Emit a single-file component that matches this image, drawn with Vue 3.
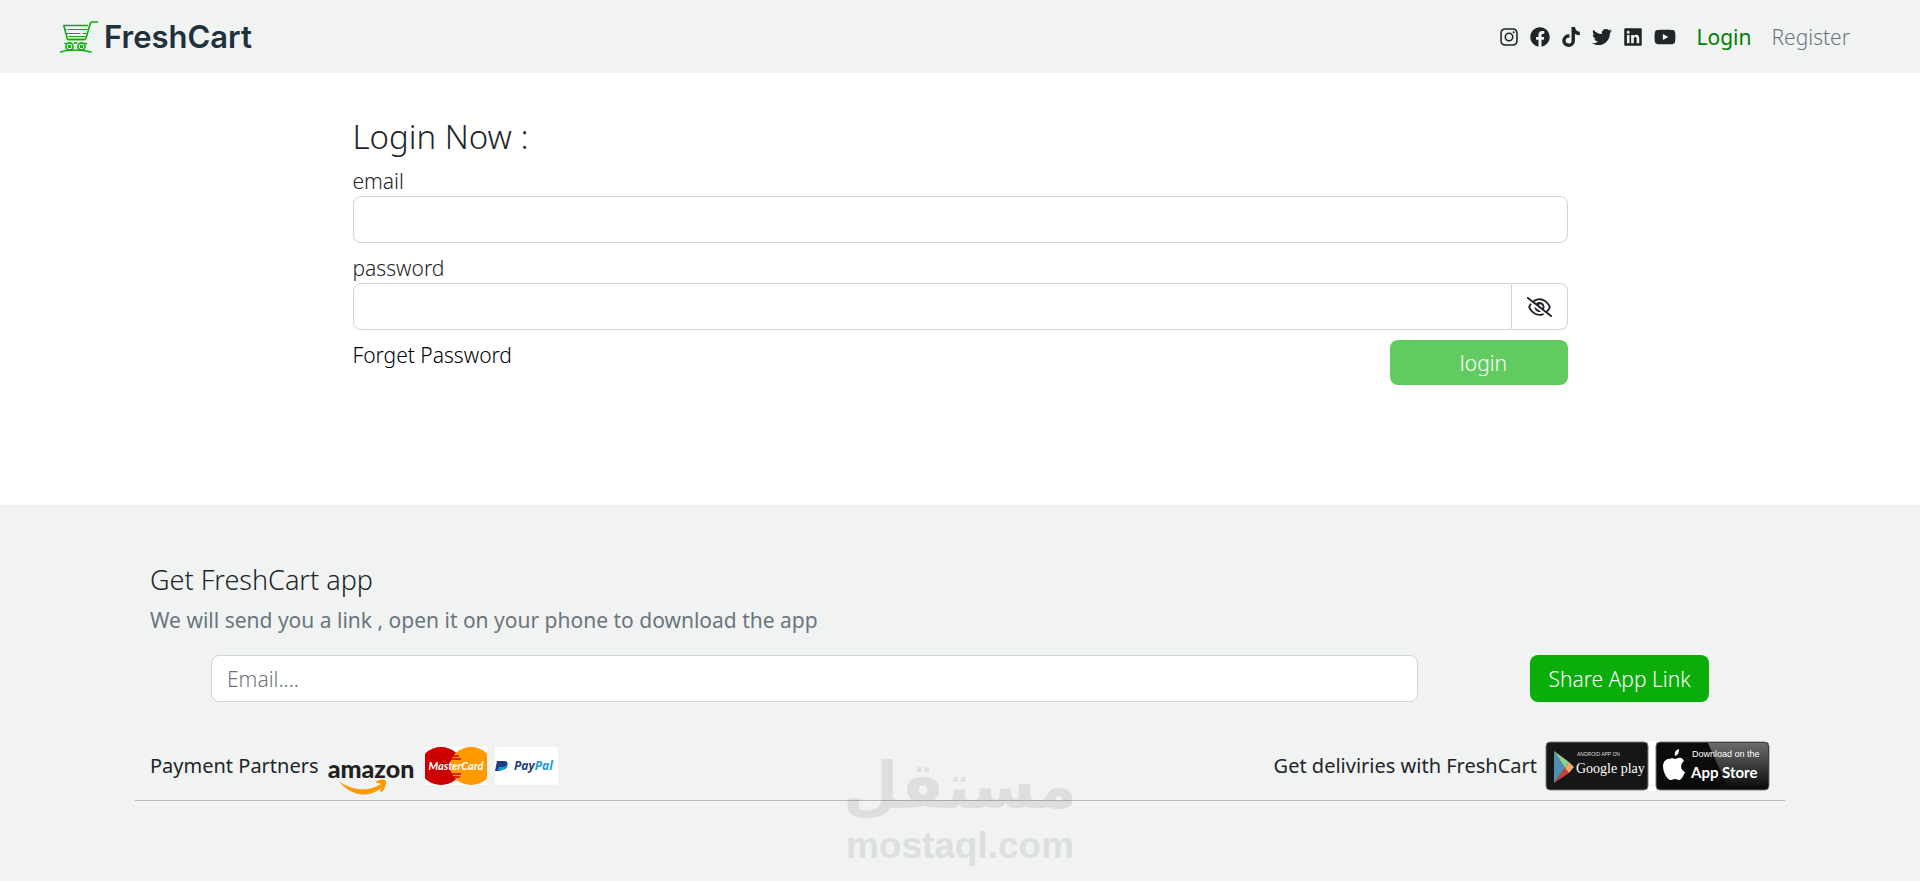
<script setup>
import { ref } from 'vue'

const email = ref('')
const password = ref('')
const shareEmail = ref('')
const showPassword = ref(false)

const socials = [
  {
    name: 'Instagram', w: 18, box: '0 0 448 512',
    d: 'M224 141a115 115 0 1 0 0 230 115 115 0 0 0 0-230zm0 190a75 75 0 1 1 0-150 75 75 0 0 1 0 150zM370 136a27 27 0 1 1-54 0 27 27 0 0 1 54 0zM130 32C50 32 0 82 0 162v188c0 80 50 130 130 130h188c80 0 130-50 130-130V162c0-80-50-130-130-130H130zm0 40h188c58 0 90 32 90 90v188c0 58-32 90-90 90H130c-58 0-90-32-90-90V162c0-58 32-90 90-90z'
  },
  {
    name: 'Facebook', w: 20, box: '0 0 512 512',
    d: 'M504 256C504 119 393 8 256 8S8 119 8 256c0 123.78 90.69 226.38 209.25 245V327.69h-63V256h63v-54.64c0-62.15 37-96.48 93.67-96.48 27.14 0 55.52 4.84 55.52 4.84v61h-31.28c-30.8 0-40.41 19.12-40.41 38.73V256h68.78l-11 71.69h-57.78V501C413.31 482.38 504 379.78 504 256z'
  },
  {
    name: 'TikTok', w: 18, box: '0 0 448 512',
    d: 'M448,209.91a210.06,210.06,0,0,1-122.77-39.25V349.38A162.55,162.55,0,1,1,185,188.31V278.2a74.62,74.62,0,1,0,52.23,71.18V0l88,0a121.18,121.18,0,0,0,1.86,22.17h0A122.18,122.18,0,0,0,381,102.39a121.43,121.43,0,0,0,67,20.14Z'
  },
  {
    name: 'Twitter', w: 20, box: '0 0 512 512',
    d: 'M459.37 151.716c.325 4.548.325 9.097.325 13.645 0 138.72-105.583 298.558-298.558 298.558-59.452 0-114.68-17.219-161.137-47.106 8.447.974 16.568 1.299 25.34 1.299 49.055 0 94.213-16.568 130.274-44.832-46.132-.975-84.792-31.188-98.112-72.772 6.498.974 12.995 1.624 19.818 1.624 9.421 0 18.843-1.3 27.614-3.573-48.081-9.747-84.143-51.98-84.143-102.985v-1.299c13.969 7.797 30.214 12.67 47.431 13.319-28.264-18.843-46.781-51.005-46.781-87.391 0-19.492 5.197-37.36 14.294-52.954 51.655 63.675 129.3 105.258 216.365 109.807-1.624-7.797-2.599-15.918-2.599-24.04 0-57.828 46.782-104.934 104.934-104.934 30.213 0 57.502 12.67 76.67 33.137 23.715-4.548 46.456-13.32 66.599-25.34-7.798 24.366-24.366 44.833-46.132 57.827 21.117-2.273 41.584-8.122 60.426-16.243-14.292 20.791-32.161 39.308-52.628 54.253z'
  },
  {
    name: 'LinkedIn', w: 18, box: '0 0 448 512',
    d: 'M416 32H31.9C14.3 32 0 46.5 0 64.3v383.4C0 465.5 14.3 480 31.9 480H416c17.6 0 32-14.5 32-32.3V64.3c0-17.8-14.4-32.3-32-32.3zM135.4 416H69V202.2h66.5V416zm-33.2-243c-21.3 0-38.5-17.3-38.5-38.5S80.9 96 102.2 96c21.2 0 38.5 17.3 38.5 38.5 0 21.3-17.2 38.5-38.5 38.5zm282.1 243h-66.4V312c0-24.8-.5-56.7-34.5-56.7-34.6 0-39.9 27-39.9 54.9V416h-66.4V202.2h63.7v29.2h.9c8.9-16.8 30.6-34.5 62.9-34.5 67.2 0 79.7 44.3 79.7 101.9V416z'
  },
  {
    name: 'YouTube', w: 22, box: '0 0 576 512',
    d: 'M549.655 124.083c-6.281-23.65-24.787-42.276-48.284-48.597C458.781 64 288 64 288 64S117.22 64 74.629 75.486c-23.497 6.322-42.003 24.947-48.284 48.597-11.412 42.867-11.412 132.305-11.412 132.305s0 89.438 11.412 132.305c6.281 23.65 24.787 41.5 48.284 47.821C117.22 448 288 448 288 448s170.78 0 213.371-11.486c23.497-6.321 42.003-24.171 48.284-47.821 11.412-42.867 11.412-132.305 11.412-132.305s0-89.438-11.412-132.305zm-317.51 213.508V175.185l142.739 81.205-142.739 81.201z'
  }
]
</script>

<template>
  <div class="page">
    <header class="navbar">
      <a class="brand" href="#">
        <svg class="cart" viewBox="0 0 38 32" width="38" height="32" fill="none" stroke="#0aad0a" stroke-width="1.6" stroke-linecap="round" stroke-linejoin="round" aria-hidden="true">
          <path d="M37.5 1h-5.2c-1.3 0-1.8.8-2.1 1.8L26 17.2c-.3.9-.8 1.3-1.8 1.3H9" />
          <path d="M27.5 4.500H3.800L7.600 18.500H24" />
          <path d="M8 8.500H27M5.500 8.500h.5M6.500 12.500H20M23 12.500h3.500M9 15.500H25" stroke-width="1.2" />
          <circle cx="9.500" cy="25.500" r="3.600" /><circle cx="9.500" cy="25.500" r="1" />
          <circle cx="21.500" cy="25.500" r="3.600" /><circle cx="21.500" cy="25.500" r="1" />
          <path d="M14 22h3M5 22.500h1M25 22.500h1.500" />
          <path d="M.8 31C8 28.300 22 28.300 31 31" />
        </svg>
        <span class="brand-name">FreshCart</span>
      </a>
      <nav class="nav-right">
        <div class="socials">
          <a v-for="s in socials" :key="s.name" href="#" :aria-label="s.name">
            <svg :viewBox="s.box" :width="s.w" height="20" fill="currentColor" aria-hidden="true"><path :d="s.d" /></svg>
          </a>
        </div>
        <a class="nav-link active" href="#">Login</a>
        <a class="nav-link" href="#">Register</a>
      </nav>
    </header>

    <main class="login">
      <h2>Login Now :</h2>
      <form @submit.prevent>
        <label for="email">email</label>
        <input id="email" v-model="email" class="control" type="email" />
        <label for="password">password</label>
        <div class="input-group">
          <input id="password" v-model="password" class="control" :type="showPassword ? 'text' : 'password'" />
          <button class="toggle" type="button" aria-label="Show password" @click="showPassword = !showPassword">
            <svg viewBox="0 0 640 512" width="25" height="20" fill="currentColor" aria-hidden="true">
              <path d="M38.800 5.100C28.400-3.100 13.300-1.200 5.100 9.200S-1.200 34.700 9.200 42.900l592 464c10.400 8.200 25.500 6.300 33.700-4.100s6.300-25.500-4.100-33.700L525.600 386.700c39.600-40.600 66.400-86.100 79.900-118.400c3.300-7.900 3.300-16.700 0-24.600c-14.900-35.700-46.200-87.700-93-131.100C465.500 68.800 400.800 32 320 32c-68.200 0-125 26.300-169.300 60.800L38.800 5.100zm151 118.300C226 97.700 269.500 80 320 80c65.200 0 118.800 29.600 159.900 67.700C518.400 183.500 545 226 558.600 256c-12.600 28-36.600 66.800-70.900 100.900l-53.800-42.200c9.100-17.600 14.200-37.500 14.200-58.700c0-70.700-57.300-128-128-128c-32.200 0-61.700 11.900-84.200 31.500l-46.100-36.100zM394.900 284.200l-81.500-63.900c4.200-8.500 6.600-18.200 6.600-28.300c0-5.500-.7-10.900-2-16c.7 0 1.300 0 2 0c44.200 0 80 35.800 80 80c0 9.900-1.800 19.400-5.100 28.200zm9.400 130.300C378.800 425.400 350.700 432 320 432c-65.200 0-118.800-29.600-159.900-67.700C121.600 328.500 95 286 81.400 256c8.300-18.400 21.500-41.500 39.400-64.800L83.100 161.500C60.300 191.200 44 220.800 34.500 243.700c-3.300 7.900-3.300 16.700 0 24.600c14.900 35.700 46.200 87.700 93 131.100C174.500 443.200 239.200 480 320 480c47.800 0 89.900-12.900 126.200-32.500l-41.900-33zM192 256c0 70.700 57.300 128 128 128c13.300 0 26.100-2 38.200-5.800L302 334c-23.500-5.400-43.100-21.200-53.700-42.300l-56.100-44.200c-.2 2.800-.3 5.600-.3 8.500z" />
            </svg>
          </button>
        </div>
        <div class="form-actions">
          <a class="forget" href="#">Forget Password</a>
          <button class="login-btn" type="submit">login</button>
        </div>
      </form>
    </main>

    <footer class="footer">
      <div class="footer-inner">
        <h3>Get FreshCart app</h3>
        <p class="lead">We will send you a link , open it on your phone to download the app</p>
        <form class="share" @submit.prevent>
          <input v-model="shareEmail" class="control" type="email" placeholder="Email...." aria-label="Email" />
          <button class="share-btn" type="submit">Share App Link</button>
        </form>
        <div class="partners">
          <div class="group">
            <span class="caption">Payment Partners</span>
            <svg class="amazon" viewBox="0 0 90 60" width="90" height="60" role="img" aria-label="amazon">
              <text x="44" y="42" text-anchor="middle" class="amazon-text">amazon</text>
              <path d="M12 45c13 10 30 11 42 3l2 2C44 63 24 61 12 45z" fill="#ff9900" />
              <path d="M49 46c4-3 8-3 10-1 0 4-1 8-4 11l-2-1c1-3 2-5 1-7-2-1-3-1-5-1z" fill="#ff9900" />
            </svg>
            <svg class="tile" viewBox="0 0 62 38" width="62" height="38" role="img" aria-label="MasterCard">
              <rect width="62" height="38" fill="#fff" />
              <ellipse cx="16" cy="19" rx="21" ry="19" fill="#cc0000" />
              <ellipse cx="46" cy="19" rx="21" ry="19" fill="#ff9900" />
              <path d="M28 9h6M26 12h10M25 27h11M27 30h8" stroke="#cc0000" stroke-width="1.500" />
              <text x="31" y="23" text-anchor="middle" class="mc-text">MasterCard</text>
            </svg>
            <svg class="tile" viewBox="0 0 63 38" width="63" height="38" role="img" aria-label="PayPal">
              <rect width="63" height="38" fill="#fff" />
              <path d="M2 14h7c4 0 4 3 3 5s-3 3-6 3l-1 2H0z" fill="#253b80" />
              <path d="M12 16c2 4-1 7-5 7l-1 1H3l1-4h3c3 0 5-1 5-4z" fill="#179bd7" />
              <text x="19" y="23" class="pp-text"><tspan fill="#253b80">Pay</tspan><tspan fill="#179bd7">Pal</tspan></text>
            </svg>
          </div>
          <div class="group">
            <span class="caption">Get deliviries with FreshCart</span>
            <svg class="stores" viewBox="0 0 225 50" width="225" height="50" role="img" aria-label="Google play and App Store">
              <defs>
                <linearGradient id="gloss" x1="0" y1="0" x2="0" y2="1">
                  <stop offset="0" stop-color="#6b6d6d" /><stop offset="1" stop-color="#0b0b0b" />
                </linearGradient>
              </defs>
              <rect width="225" height="50" fill="#fff" />
              <rect x="1" y="1" width="102" height="48" rx="4" fill="#161616" stroke="#777" />
              <path d="M9 10v32l11-15z" fill="#4f8fb5" />
              <path d="M9 10l15 11-4 6z" fill="#8fce8c" />
              <path d="M9 42l15-10-4-5z" fill="#c9403c" />
              <path d="M24 21l5 5-5 6-4-5z" fill="#f0a868" />
              <text x="32" y="15" class="g-small">ANDROID APP ON</text>
              <text x="31" y="32" class="g-big">Google play</text>
              <rect x="111" y="1" width="113" height="48" rx="4" fill="#0b0b0b" stroke="#777" />
              <path d="M163 2h57q3 0 3 3v42h-40z" fill="url(#gloss)" />
              <path d="M130 15c-1-4 1-6 4-7 0 4-1 6-4 7zM126 17c2 0 3 1 4 1s3-2 6-1c1 0 2 1 3 3-4 3-4 9 1 11-2 5-4 8-6 8-2 0-2-1-4-1s-2 1-4 1c-4 0-8-8-8-14 0-5 4-8 8-7z" fill="#fff" />
              <text x="147" y="16" class="a-small">Download on the</text>
              <text x="146" y="37" class="a-big">App Store</text>
            </svg>
          </div>
        </div>
      </div>
      <div class="watermark" aria-hidden="true">
        <span class="wm-ar" lang="ar">مستقل</span>
        <span class="wm-en">mostaql.com</span>
      </div>
    </footer>
  </div>
</template>

<style>
body {
  margin: 0;
  background: #fff;
}
</style>

<style scoped>
.page {
  font-family: "Noto Sans", "Open Sans", sans-serif;
  font-size: 21px;
  font-weight: 300;
  line-height: 30px;
  color: #212529;
}
.page *, .page *::before {
  box-sizing: border-box;
}
a {
  color: inherit;
  text-decoration: none;
}
input, button {
  font: inherit;
  color: inherit;
}
.navbar {
  display: flex;
  align-items: center;
  justify-content: space-between;
  padding: 0 70px 0 60px;
  height: 73px;
  background: #f0f3f2;
}
.brand {
  display: flex;
  align-items: center;
  gap: 6px;
}
.brand-name {
  font-family: Inter, sans-serif;
  font-weight: 600;
  font-size: 31px;
  line-height: 40px;
  color: #21313c;
}
.nav-right {
  display: flex;
  align-items: center;
  gap: 20px;
}
.socials {
  display: flex;
  gap: 12px;
}
.socials a, .socials svg {
  display: block;
}
.nav-link {
  color: #6c757d;
}
.nav-link.active {
  color: green;
  font-weight: 400;
}
.login {
  width: 1215px;
  max-width: 90%;
  margin: 0 auto;
  padding: 45px 0 120px;
}
h2 {
  margin: 0 0 10px;
  font-weight: 300;
  font-size: 33px;
  line-height: 38px;
}
label {
  display: block;
}
.control {
  display: block;
  width: 100%;
  height: 47px;
  padding: 0 15px;
  border: 1px solid #ced4da;
  border-radius: 8px;
  background: #fff;
  outline: none;
}
.control::placeholder {
  color: #6c757d;
  opacity: 1;
}
#email {
  margin-bottom: 10px;
}
.input-group {
  display: flex;
}
.input-group .control {
  flex: 1;
  border-radius: 8px 0 0 8px;
}
.toggle {
  display: flex;
  align-items: center;
  justify-content: center;
  width: 56px;
  border: 1px solid #ced4da;
  border-left: 0;
  border-radius: 0 8px 8px 0;
  background: #fff;
}
.form-actions {
  display: flex;
  justify-content: space-between;
  align-items: flex-start;
  margin-top: 10px;
}
.forget {
  color: #000;
}
.login-btn {
  width: 178px;
  height: 45px;
  padding: 0 0 0 10px;
  border: 0;
  border-radius: 8px;
  background: #61cb61;
  color: #fff;
}
.footer {
  position: relative;
  padding: 60px 20px 80px;
  background: #f0f3f2;
}
.footer-inner {
  max-width: 1650px;
  margin: 0 auto;
}
h3 {
  margin: 0 15px 10px;
  font-weight: 300;
  font-size: 27px;
  line-height: 30px;
}
.lead {
  margin: 0 15px 20px;
  font-weight: 400;
  color: #6c757d;
}
.share {
  display: flex;
  justify-content: space-between;
  gap: 112px;
  padding: 0 76px;
}
.share .control {
  flex: 1;
}
.share-btn {
  width: 179px;
  height: 47px;
  padding: 0;
  border: 0;
  border-radius: 8px;
  background: #0aad0a;
  color: #fff;
}
.partners {
  display: flex;
  justify-content: space-between;
  align-items: center;
  margin-top: 30px;
  padding: 0 15px;
  border-bottom: 1px solid #b9bbbb;
  height: 69px;
}
.group {
  display: flex;
  align-items: center;
  gap: 8px;
}
.caption {
  font-size: 20px;
  font-weight: 400;
}
.amazon-text {
  font: 900 25px Lato, sans-serif;
  fill: #221f1f;
}
.mc-text {
  font: italic 700 11px Lato, sans-serif;
  fill: #fff;
}
.pp-text {
  font: italic 700 12px "Open Sans", sans-serif;
}
.g-small {
  font: 5px "Liberation Sans", sans-serif;
  fill: #ddd;
}
.g-big {
  font: 14px "Liberation Serif", serif;
  fill: #fff;
}
.a-small {
  font: 9px "Liberation Sans", sans-serif;
  fill: #fff;
}
.a-big {
  font: 700 15px Lato, sans-serif;
  fill: #fff;
}
.watermark {
  position: absolute;
  left: 50%;
  bottom: 15px;
  transform: translateX(-50%);
  display: flex;
  flex-direction: column;
  align-items: center;
  color: #000;
  opacity: 0.08;
  pointer-events: none;
}
.wm-ar {
  font-family: "DejaVu Sans", sans-serif;
  font-weight: 700;
  font-size: 64px;
  line-height: 80px;
}
.wm-en {
  font-family: "Liberation Sans", sans-serif;
  font-weight: 700;
  font-size: 37px;
  line-height: 40px;
}
</style>
